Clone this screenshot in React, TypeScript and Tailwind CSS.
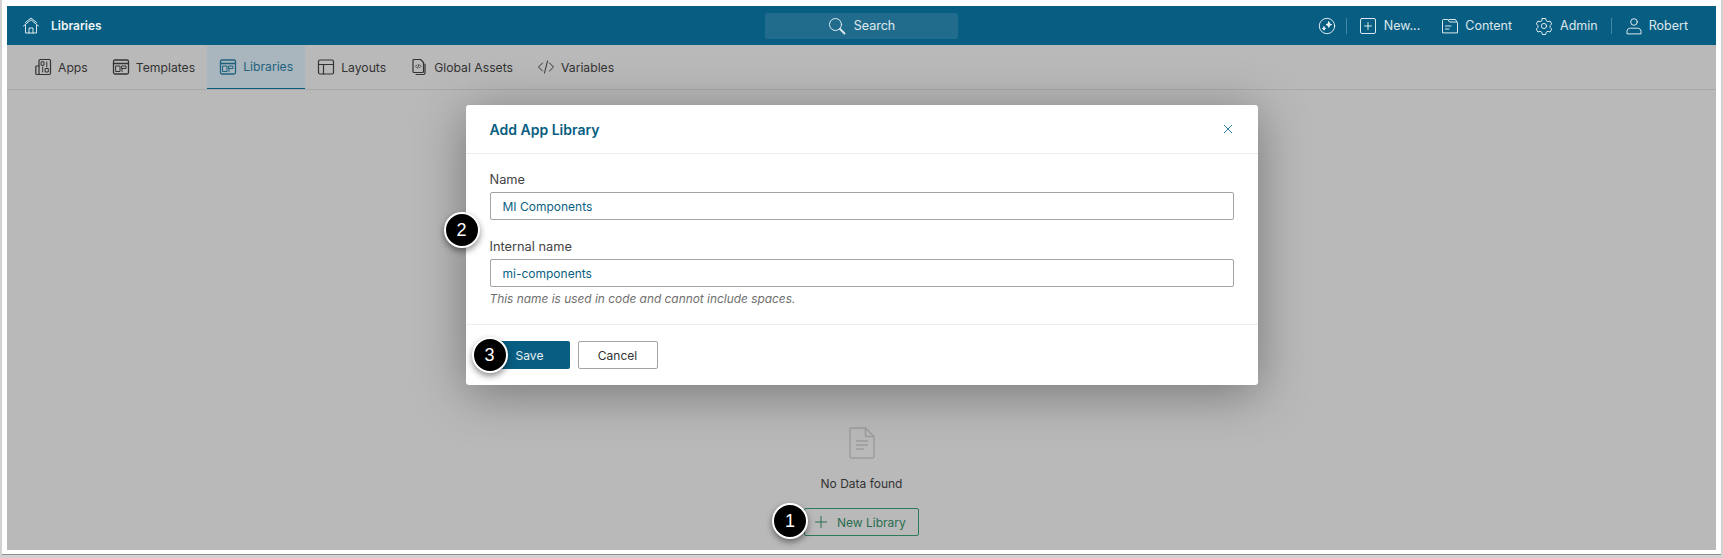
import type { ReactNode } from 'react';

function Icon({ size = 18, children, className = '' }: { size?: number; children: ReactNode; className?: string }) {
    return (
        <svg
            width={size}
            height={size}
            viewBox="0 0 18 18"
            fill="none"
            stroke="currentColor"
            strokeWidth="1"
            strokeLinecap="round"
            strokeLinejoin="round"
            className={`shrink-0 ${className}`}
        >
            {children}
        </svg>
    );
}

const HomeIcon = () => (
    <Icon>
        <path d="M1.500 9 9 2.800 16.500 9" />
        <path d="M3.500 5.500 9 1l5.500 4.500" />
        <path d="M3.500 8.500v7.500h11V8.500" />
        <path d="M7 16v-5h4v5" />
    </Icon>
);

const SparkIcon = () => (
    <Icon>
        <circle cx="9" cy="9" r="7.700" />
        <path d="M10.800 4.800l.8 2 2 .8-2 .8-.8 2-.8-2-2-.8 2-.8z" fill="currentColor" />
        <path d="M6 9.800l.5 1.200 1.200.5-1.200.5-.5 1.200-.5-1.200-1.200-.5 1.200-.5z" fill="currentColor" />
    </Icon>
);

const NewIcon = () => (
    <Icon>
        <rect x="1.500" y="1.500" width="15" height="15" rx="1.500" />
        <path d="M9 5.500v7M5.500 9h7" />
    </Icon>
);

const FolderIcon = () => (
    <Icon>
        <path d="M1.500 15.500V3.500a1 1 0 0 1 1-1h4.300l1.700 2.500h7a1 1 0 0 1 1 1v9.500z" />
        <path d="M8 2.500h6.500l1.500 2.500" />
        <path d="M4.500 9h5.500M4.500 12h3.500" />
    </Icon>
);

const GearIcon = () => (
    <Icon>
        <circle cx="9" cy="9" r="2.600" />
        <path d="M7.300 1.500h3.400l.5 2.200 1.700 1 2.200-.7 1.600 2.900L15.100 8.500v2l1.600 1.600-1.600 2.900-2.200-.7-1.700 1-.5 2.200H7.300l-.5-2.200-1.700-1-2.200.7-1.600-2.900L2.900 10.500v-2L1.300 6.900l1.600-2.900 2.200.7 1.700-1z" />
    </Icon>
);

const UserIcon = () => (
    <Icon>
        <circle cx="9" cy="5" r="3.300" />
        <path d="M2 16.500v-2.300c0-1.800 1.500-3 3.500-3h7c2 0 3.500 1.200 3.500 3v2.300z" />
    </Icon>
);

const AppsIcon = () => (
    <Icon>
        <rect x="5" y="1.500" width="11.500" height="15" rx="1.200" strokeWidth="1.200" />
        <path d="M5 8H2.800a1 1 0 0 0-1 1v6.500a1 1 0 0 0 1 1H5" strokeWidth="1.200" />
        <rect x="7.500" y="3.800" width="2.500" height="3.500" />
        <rect x="11.500" y="10.500" width="2.800" height="3.500" />
        <path d="M8.700 9v5M12.800 4v5" />
    </Icon>
);

const TemplateIcon = () => (
    <Icon>
        <rect x="1.500" y="2" width="15" height="14" rx="1.500" strokeWidth="1.300" />
        <path d="M1.500 5.500h15" strokeWidth="1.300" />
        <rect x="4" y="8" width="4" height="5.500" />
        <path d="M10 8h4v2.500h-4zM10 10.500v3" />
    </Icon>
);

const LayoutIcon = () => (
    <Icon>
        <rect x="1.500" y="2" width="15" height="14" rx="1.500" strokeWidth="1.200" />
        <path d="M1.500 6.500h15M6.500 6.500V16" strokeWidth="1.200" />
    </Icon>
);

const AssetIcon = () => (
    <Icon>
        <path d="M3 2.500a1 1 0 0 1 1-1h6.500L13.500 4.500v9a1 1 0 0 1-1 1H4a1 1 0 0 1-1-1z" strokeWidth="1.200" />
        <path d="M15 6v9a1.500 1.500 0 0 1-1.500 1.500H6" strokeWidth="1.200" />
        <path d="M6.800 7 5.500 8.300l1.300 1.300M9.700 7 11 8.300 9.700 9.600M8.700 6.500l-.9 3.700" strokeWidth="0.800" />
    </Icon>
);

const CodeIcon = () => (
    <Icon>
        <path d="M5.500 5 1.500 9l4 4M12.500 5l4 4-4 4M10.500 3l-3 12" />
    </Icon>
);

const SearchIcon = () => (
    <Icon>
        <circle cx="7.500" cy="7.500" r="6" />
        <path d="M12 12l4.500 4.500" strokeWidth="1.800" />
    </Icon>
);

const tabs = [
    { label: 'Apps', icon: <AppsIcon /> },
    { label: 'Templates', icon: <TemplateIcon /> },
    { label: 'Libraries', icon: <TemplateIcon />, active: true },
    { label: 'Layouts', icon: <LayoutIcon /> },
    { label: 'Global Assets', icon: <AssetIcon /> },
    { label: 'Variables', icon: <CodeIcon /> },
];

function Badge({ n, className }: { n: number; className: string }) {
    return (
        <div
            className={`absolute z-10 flex h-9 w-9 items-center justify-center rounded-full border-2 border-white bg-black font-['Liberation_Sans',sans-serif] text-[18px] font-normal text-white shadow-[0_3px_6px_rgba(0,0,0,0.45)] ${className}`}
        >
            {n}
        </div>
    );
}

function HeaderLink({ icon, label, gap = 'gap-[7px]' }: { icon: ReactNode; label: string; gap?: string }) {
    return (
        <div className={`flex items-center ${gap}`}>
            {icon}
            <span className="pt-px">{label}</span>
        </div>
    );
}

function Field({ label, value, className = '' }: { label: string; value: string; className?: string }) {
    return (
        <div className={className}>
            <div className="pt-px text-[12.800px] leading-[15px] text-[#444444]">{label}</div>
            <div className="mt-[5px] flex h-[28px] items-center rounded-[2px] border border-[#a3a3a3] px-3 pt-px text-[12px] text-[#0b5f82]">
                {value}
            </div>
        </div>
    );
}

export default function App() {
    return (
        <div className="flex h-[558px] w-[1723px] bg-[#d2d2d2] px-[2px] pb-[3px] font-['Inter',sans-serif]">
            <div className="relative flex flex-1 flex-col border-b border-[#8f8f8f] bg-white px-[5px] pt-[6px] pb-[4px]">
                <header className="grid h-[39px] shrink-0 grid-cols-3 items-center bg-[#075e82] text-[12.500px] text-white/85">
                    <div className="flex items-center gap-[11px] pl-[15px]">
                        <HomeIcon />
                        <span className="pt-px text-[12px] font-semibold text-white/95">Libraries</span>
                    </div>
                    <div className="flex justify-center">
                        <div className="flex h-[26px] w-[193px] items-center justify-center gap-[8px] rounded-[2px] bg-[#216c8c]">
                            <SearchIcon />
                            <span className="pt-px">Search</span>
                        </div>
                    </div>
                    <div className="flex items-center justify-end pr-[28px]">
                        <SparkIcon />
                        <div className="mr-[12px] ml-[10px] h-[16px] w-px bg-white/25" />
                        <HeaderLink icon={<NewIcon />} label="New..." />
                        <div className="w-[21px]" />
                        <HeaderLink icon={<FolderIcon />} label="Content" gap="gap-[6px]" />
                        <div className="w-[23px]" />
                        <HeaderLink icon={<GearIcon />} label="Admin" />
                        <div className="mx-[13px] h-[16px] w-px bg-white/25" />
                        <HeaderLink icon={<UserIcon />} label="Robert" gap="gap-[6px]" />
                    </div>
                </header>

                <nav className="flex h-[45px] shrink-0 items-stretch border-b border-[#a9a9a9] bg-[#b9b9b9] pl-[15px] text-[12.200px] text-[#333333]">
                    {tabs.map((tab) => (
                        <div
                            key={tab.label}
                            className={`flex items-center gap-[6px] px-[12px] ${
                                tab.active ? 'border-b border-[#0b5a7e] bg-[#a9b6bd] text-[#1f6280]' : ''
                            }`}
                        >
                            {tab.icon}
                            <span className="pt-[2px]">{tab.label}</span>
                        </div>
                    ))}
                </nav>

                <main className="flex flex-1 flex-col items-center justify-end bg-[#b9b9b9] pb-[14px]">
                    <svg width="26" height="32" viewBox="0 0 26 32" fill="none" stroke="#9c9c9c" strokeWidth="1.500" strokeLinejoin="round">
                        <path d="M2.500 1h14L25 9.500V29a2 2 0 0 1-2 2H3a2 2 0 0 1-2-2V2.500A1.500 1.500 0 0 1 2.500 1z" />
                        <path d="M16.500 1v8.500H25" />
                        <path d="M7 14h12M7 18h12M7 22h8" />
                    </svg>
                    <div className="mt-[17px] text-[12px] leading-[16px] text-[#333333]">No Data found</div>
                    <div className="relative mt-[16px] flex h-[28px] w-[115px] items-center gap-[9px] rounded-[2px] border border-[#2f7a58] pl-[9px] text-[12px] text-[#2a6e50]">
                        <svg width="14" height="14" viewBox="0 0 14 14" fill="none" stroke="currentColor" strokeWidth="1">
                            <path d="M7 1v12M1 7h12" />
                        </svg>
                        <span className="pt-px">New Library</span>
                        <Badge n={1} className="top-[-6px] left-[-33px]" />
                    </div>
                </main>

                <div className="absolute inset-x-0 top-[105px] flex justify-center">
                    <div className="relative flex h-[280px] w-[792px] flex-col rounded-[3px] bg-white shadow-[0_8px_50px_rgba(0,0,0,0.36)]">
                        <div className="flex h-[49px] items-center justify-between border-b border-[#ececec] pr-[25px] pl-[24px]">
                            <span className="text-[14px] font-semibold text-[#075e82]">Add App Library</span>
                            <svg width="10" height="10" viewBox="0 0 10 10" stroke="#2f7ea3" strokeWidth="1">
                                <path d="M1 1l8 8M9 1L1 9" />
                            </svg>
                        </div>
                        <div className="flex-1 px-[24px] pt-[17px]">
                            <Field label="Name" value="MI Components" />
                            <Field label="Internal name" value="mi-components" className="mt-[18px]" />
                            <div className="mt-[4px] text-[11.900px] leading-[16px] text-[#6f6f6f] italic">
                                This name is used in code and cannot include spaces.
                            </div>
                        </div>
                        <div className="flex h-[61px] items-center gap-[8px] border-t border-[#ececec] px-[24px]">
                            <div className="flex h-[28px] w-[80px] items-center justify-center rounded-[2px] bg-[#075e82] pt-px text-[12px] text-white/90">
                                Save
                            </div>
                            <div className="flex h-[28px] w-[80px] items-center justify-center rounded-[2px] border border-[#a3a3a3] pt-px text-[12px] text-[#333333]">
                                Cancel
                            </div>
                        </div>
                        <Badge n={2} className="top-[107px] left-[-22px]" />
                        <Badge n={3} className="top-[232px] left-[6px]" />
                    </div>
                </div>
            </div>
        </div>
    );
}
